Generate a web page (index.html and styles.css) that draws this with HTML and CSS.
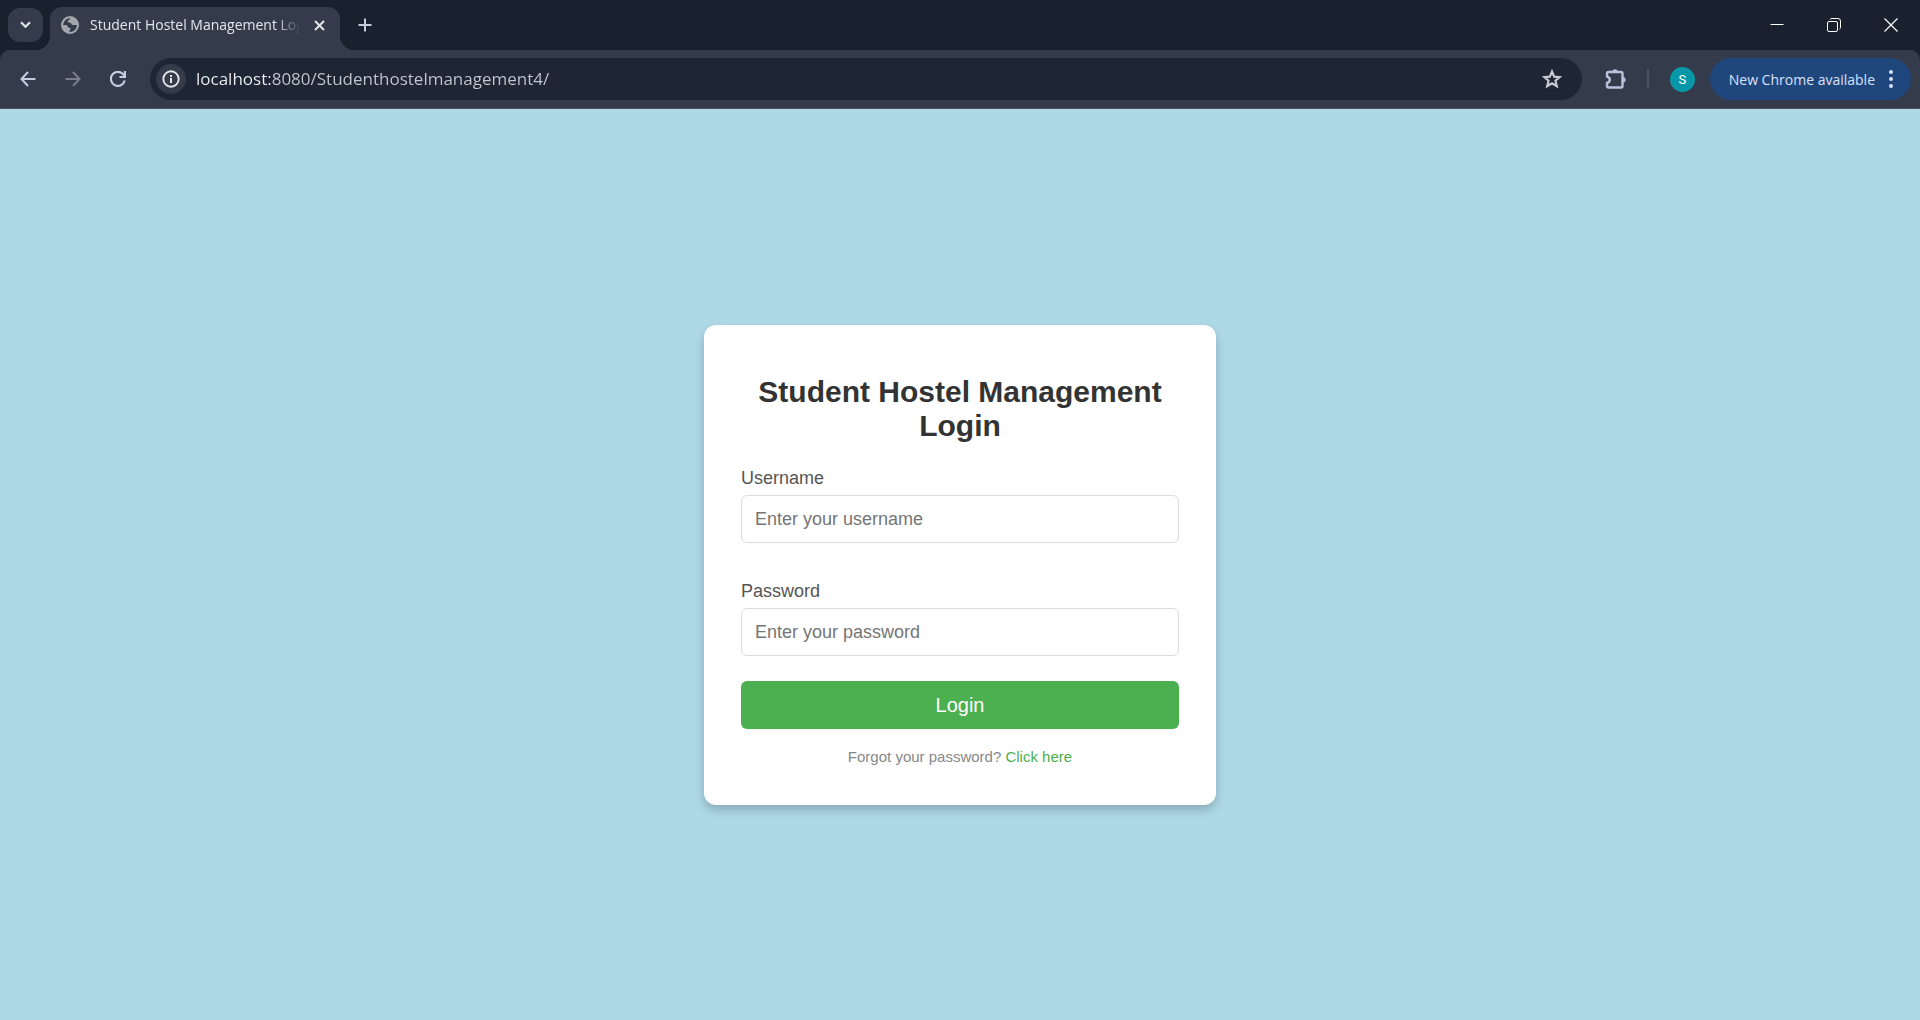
FILE: index.html
```html
<!DOCTYPE html>
<html lang="en">
<head>
<meta charset="utf-8">
<meta name="viewport" content="width=device-width, initial-scale=1">
<title>Student Hostel Management Login</title>
<link rel="stylesheet" href="styles.css">
</head>
<body>
<header class="browser">
  <div class="tab-strip">
    <button class="tab-search" type="button" aria-label="Search tabs">
      <svg width="11" height="8" viewBox="0 0 11 8"><path d="M1 1.200 5.500 5.700 10 1.200" fill="none" stroke="currentColor" stroke-width="2.200"/></svg>
    </button>
    <div class="tab">
      <svg class="tab-icon" width="18" height="18" viewBox="0 0 18 18"><circle cx="9" cy="9" r="9" fill="#a3a7ad"/><path d="M9 2.2C9.5 3.6 6.800 4.300 6.700 5.400C6.600 6.500 8 6.200 9.200 6.700C10.500 7.200 10.300 8.600 11.600 9C12.600 9.300 14 8.600 15.900 9.200A7 7 0 0 1 9 15.900C7.400 15.700 9.100 14 9.500 13C9.900 11.900 8.700 11.700 7.500 11.400C6.300 11.100 6.900 9.600 5.600 9.100C4.500 8.700 3.200 9.200 2.100 8.900A7 7 0 0 1 9 2.200Z" fill="#343c4c"/></svg>
      <span class="tab-title">Student Hostel Management Login</span>
      <button class="tab-close" type="button" aria-label="Close tab">
        <svg width="11" height="11" viewBox="0 0 11 11"><path d="M1 1 10 10M10 1 1 10" stroke="currentColor" stroke-width="2"/></svg>
      </button>
    </div>
    <button class="new-tab" type="button" aria-label="New tab">
      <svg width="14" height="14" viewBox="0 0 14 14"><path d="M7 0.500V13.500M0.500 7H13.500" stroke="currentColor" stroke-width="2"/></svg>
    </button>
    <div class="window-controls">
      <button type="button" aria-label="Minimize"><svg width="14" height="14" viewBox="0 0 14 14"><path d="M0.500 6.500H13.500" stroke="currentColor"/></svg></button>
      <button type="button" aria-label="Restore"><svg width="14" height="14" viewBox="0 0 14 14" fill="none" stroke="currentColor"><rect x="0.500" y="3.500" width="10" height="10" rx="1.500"/><path d="M3 1.500Q3.500 0.500 5 0.500H11Q13.500 0.500 13.500 3V9.500Q13.500 10.700 12.500 11.200"/></svg></button>
      <button type="button" aria-label="Close"><svg width="14" height="14" viewBox="0 0 14 14"><path d="M0.500 0.500 13.500 13.500M13.500 0.500 0.500 13.500" stroke="currentColor" stroke-width="1.200"/></svg></button>
    </div>
  </div>
  <div class="toolbar">
    <nav class="nav-buttons" aria-label="History">
      <button type="button" aria-label="Back"><svg width="16" height="16" viewBox="0 0 16 16" fill="none" stroke="currentColor" stroke-width="2"><path d="M8 1 1.500 8 8 15M1.500 8H15.500"/></svg></button>
      <button type="button" aria-label="Forward" disabled><svg width="16" height="16" viewBox="0 0 16 16" fill="none" stroke="currentColor" stroke-width="2"><path d="M8 1 14.500 8 8 15M14.500 8H0.500"/></svg></button>
      <button type="button" aria-label="Reload"><svg width="16" height="16" viewBox="0 0 16 16" fill="none" stroke="currentColor" stroke-width="2.200"><path d="M14.700 9.500A7 7 0 1 1 13.200 3.300L15 5.200M15 0V6H9.500"/></svg></button>
    </nav>
    <div class="omnibox">
      <button class="site-info" type="button" aria-label="View site information">
        <svg width="18" height="18" viewBox="0 0 18 18"><circle cx="9" cy="9" r="7.700" fill="none" stroke="currentColor" stroke-width="1.900"/><path d="M9 8V13M9 5V7" stroke="currentColor" stroke-width="2"/></svg>
      </button>
      <input class="address" type="text" aria-label="Address" value="localhost:8080/Studenthostelmanagement4/">
      <button class="bookmark" type="button" aria-label="Bookmark this tab">
        <svg width="20" height="20" viewBox="0 0 20 20"><path d="M10 2.500 12.200 7.600 17.700 8.100 13.500 11.700 14.800 17.200 10 14.300 5.200 17.200 6.500 11.700 2.300 8.100 7.800 7.600Z" fill="none" stroke="currentColor" stroke-width="2.200"/></svg>
      </button>
    </div>
    <button class="extensions" type="button" aria-label="Extensions">
      <svg width="22" height="22" viewBox="0 0 22 22"><path d="M3.500 4H16Q17.500 4 17.500 5.500V18Q17.500 19.500 16 19.500H3.500Q2 19.500 2 18V15Q4.800 14.300 4.800 11.800Q4.800 9.300 2 8.500V5.500Q2 4 3.500 4Z" fill="none" stroke="currentColor" stroke-width="2.400"/><path d="M7.300 4A2.700 2.700 0 0 1 12.700 4ZM17.800 9A2.800 2.800 0 0 1 17.800 14.600Z" fill="currentColor"/></svg>
    </button>
    <span class="divider"></span>
    <button class="profile" type="button" aria-label="Profile">S</button>
    <button class="update" type="button">New Chrome available
      <svg width="4" height="18" viewBox="0 0 4 18" fill="currentColor"><circle cx="2" cy="2" r="2"/><circle cx="2" cy="9" r="2"/><circle cx="2" cy="16" r="2"/></svg>
    </button>
  </div>
</header>
<main class="page">
  <form class="login-card">
    <h1>Student Hostel Management Login</h1>
    <div class="field">
      <label for="username">Username</label>
      <input id="username" type="text" placeholder="Enter your username">
    </div>
    <div class="field">
      <label for="password">Password</label>
      <input id="password" type="password" placeholder="Enter your password">
    </div>
    <button class="submit" type="button">Login</button>
    <p class="forgot">Forgot your password? <a href="#">Click here</a></p>
  </form>
</main>
</body>
</html>
```
FILE: styles.css
```css
* { box-sizing: border-box; }

body {
  margin: 0;
  min-height: 100vh;
  display: flex;
  flex-direction: column;
  font-family: "Liberation Sans", Arial, sans-serif;
  background: #add8e6;
}

button {
  margin: 0;
  padding: 0;
  border: 0;
  background: none;
  color: inherit;
  font: inherit;
  display: flex;
  align-items: center;
  justify-content: center;
}

/* Browser frame */
.browser {
  background: #19212f;
  color: #e3e5ea;
  font-family: "Open Sans", "Noto Sans", sans-serif;
}

.tab-strip {
  display: flex;
  height: 50px;
  padding-left: 8px;
}

.tab-search {
  width: 35px;
  height: 34px;
  margin-top: 8px;
  border-radius: 12px;
  background: #343c4c;
}

.tab {
  position: relative;
  display: flex;
  align-items: center;
  width: 290px;
  height: 43px;
  margin: 7px 0 0 7px;
  padding: 0 14px 7px 11px;
  border-radius: 12px 12px 0 0;
  background: #343c4c;
}

.tab::before,
.tab::after {
  content: "";
  position: absolute;
  bottom: 0;
  width: 14px;
  height: 14px;
}

.tab::before {
  right: 100%;
  background: radial-gradient(circle at 0 0, transparent 14px, #343c4c 14px);
}

.tab::after {
  left: 100%;
  background: radial-gradient(circle at 100% 0, transparent 14px, #343c4c 14px);
}

.tab-icon { flex: none; }

.tab-title {
  flex: 1;
  margin: 0 12px 0 11px;
  overflow: hidden;
  white-space: nowrap;
  font-size: 14px;
  line-height: 20px;
  mask-image: linear-gradient(to left, transparent, #000 24px);
}

.tab-close { width: 14px; height: 20px; }

.new-tab {
  width: 34px;
  height: 34px;
  margin: 8px 0 0 8px;
  color: #c5cbe0;
}

.window-controls {
  display: flex;
  margin-left: auto;
  padding-right: 1px;
  color: #fff;
}

.window-controls button { width: 57px; height: 49px; }

.toolbar {
  display: flex;
  align-items: center;
  height: 59px;
  padding: 0 9px 0 5px;
  border-bottom: 1px solid #4a4f5a;
  border-radius: 10px 10px 0 0;
  background: #343c4c;
}

.nav-buttons {
  display: flex;
  margin-right: 10px;
  color: #c5cbe0;
}

.nav-buttons button { width: 45px; height: 42px; }
.nav-buttons button:disabled { color: #777d8d; }

.omnibox {
  flex: 1;
  display: flex;
  align-items: center;
  height: 42px;
  padding: 0 20px 0 6px;
  border-radius: 21px;
  background: #1e2635;
}

.site-info {
  width: 30px;
  height: 30px;
  border-radius: 15px;
  background: #343c4c;
}

.address {
  flex: 1;
  margin: 0 10px;
  padding: 0;
  border: 0;
  outline: 0;
  font: 17px/24px "Open Sans", "Noto Sans", sans-serif;
  color: #c4c7ce;
  background: linear-gradient(to right, #f0f1f4 74px, #c4c7ce 74px) text;
  -webkit-text-fill-color: transparent;
}

.bookmark { color: #c7c9d0; }

.extensions { margin-left: 23px; color: #b8c2dc; }

.divider {
  width: 2px;
  height: 20px;
  margin: 0 21px 0 20px;
  border-radius: 1px;
  background: #4b5366;
}

.profile {
  width: 25px;
  height: 25px;
  border-radius: 50%;
  background: #0797a7;
  color: #fff;
  font-family: Roboto, sans-serif;
  font-size: 13px;
}

.update {
  gap: 14px;
  height: 42px;
  margin-left: 15px;
  padding: 0 18px 0 19px;
  border-radius: 21px;
  background: #20467e;
  color: #d8e2fa;
  font-size: 14px;
}

/* Login page */
.page {
  flex: 1;
  display: flex;
  align-items: center;
  justify-content: center;
}

.login-card {
  width: 512px;
  max-width: 100%;
  padding: 50px 37px 39px;
  border-radius: 12px;
  background: #fff;
  box-shadow: 0 5px 10px rgba(0, 0, 0, 0.2);
}

.login-card h1 {
  margin: 0 0 25px;
  font-size: 30px;
  line-height: 34px;
  text-align: center;
  color: #333;
}

.field { margin-bottom: 38px; }
.field + .submit { margin-top: -13px; }

.field label {
  display: block;
  margin-bottom: 7px;
  font-size: 18px;
  line-height: 20px;
  color: #555;
}

.field input {
  display: block;
  width: 100%;
  height: 48px;
  padding: 2px 13px 0;
  border: 1px solid #ddd;
  border-radius: 6px;
  font: 18px/20px "Liberation Sans", Arial, sans-serif;
  color: #333;
}

.field input::placeholder { color: #757575; }

.submit {
  width: 100%;
  height: 48px;
  padding-top: 2px;
  border-radius: 6px;
  background: #4caf50;
  color: #fff;
  font-size: 20px;
}

.forgot {
  margin: 19px 0 0;
  font-size: 15px;
  line-height: 18px;
  text-align: center;
  color: #888;
}

.forgot a { color: #4caf50; text-decoration: none; }
```
